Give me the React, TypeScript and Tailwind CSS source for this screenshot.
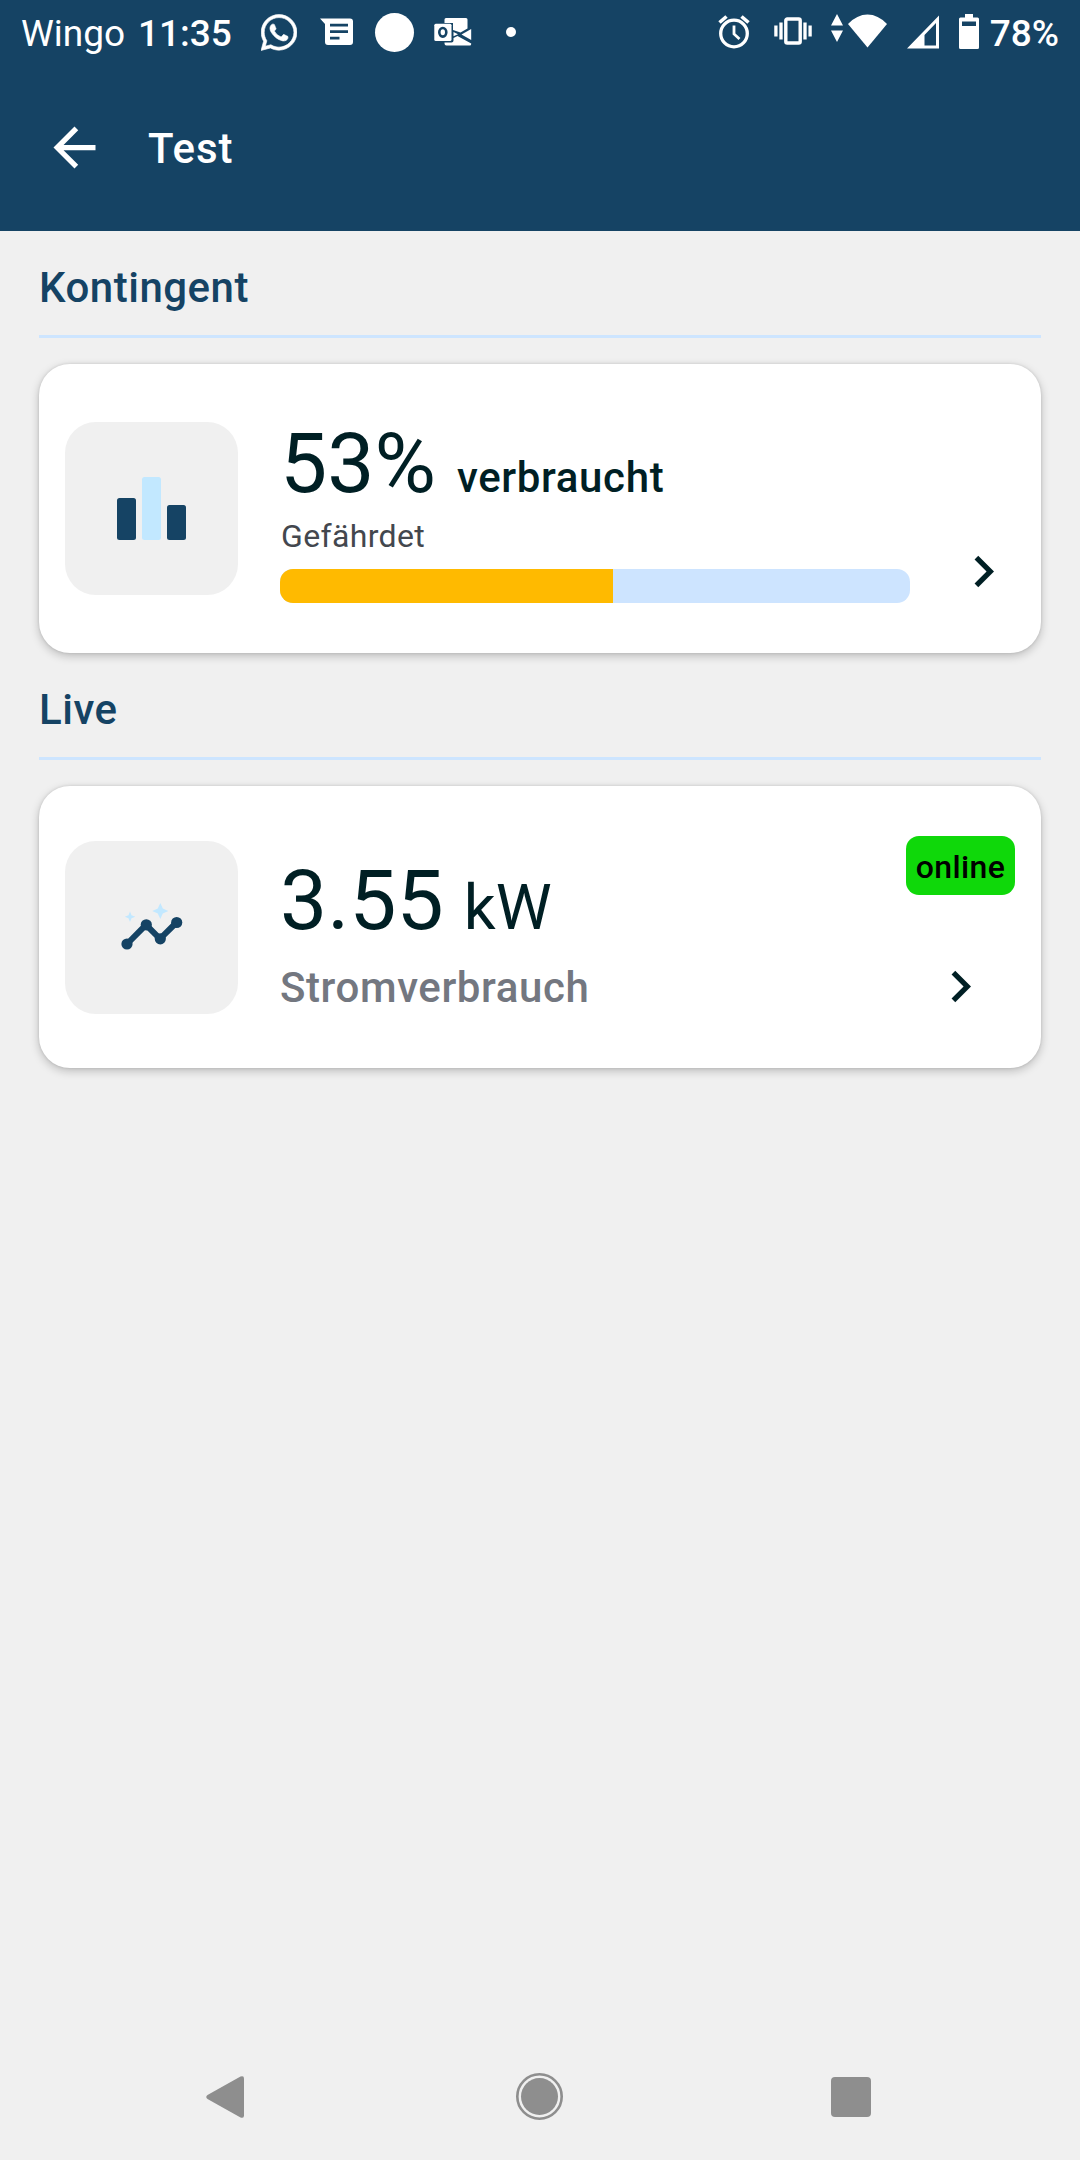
import type { ReactNode } from 'react';
import { FaWhatsapp } from 'react-icons/fa';
import { MdArrowBack, MdChevronRight } from 'react-icons/md';

export default function App() {
  return (
    <div className="flex h-[2160px] w-[1080px] flex-col overflow-hidden bg-[#f0f0f0] font-[Roboto,sans-serif]">
      <header className="h-[231px] bg-[#154364] text-white">
        <StatusBar />
        <div className="flex h-[167px] items-center pl-[43px]">
          <MdArrowBack className="size-[63px]" />
          <h1 className="ml-[42px] pt-[3px] text-[42px] font-medium leading-none tracking-[0.9px]">Test</h1>
        </div>
      </header>

      <main className="flex-1 px-[39px]">
        <Section title="Kontingent">
          <QuotaCard percent={53} />
        </Section>
        <Section title="Live">
          <LiveCard />
        </Section>
      </main>

      <NavBar />
    </div>
  );
}

function StatusBar() {
  return (
    <div className="flex h-16 items-center pl-[21px] pr-[21px] text-[37px] leading-none">
      <span className="w-[117px] pt-[2px]">Wingo</span>
      <span className="w-[123px] pt-[2px] font-medium">11:35</span>
      <FaWhatsapp className="h-[41px] w-9" stroke="#fff" strokeWidth="8" />

      {/* messages */}
      <svg className="ml-[23px] mb-px h-7 w-[33px]" viewBox="0 0 33 28" fill="none">
        <path d="M0 .5h30a3 3 0 0 1 3 3V24a3 3 0 0 1-3 3H8a3 3 0 0 1-3-3V6z" fill="#fff" />
        <path d="M10 7.2h18M10 13.7h18M10 20.2h9.500" stroke="#154364" strokeWidth="2.8" />
      </svg>

      <span className="ml-[22px] size-[39px] rounded-full bg-white" />

      {/* outlook */}
      <svg className="ml-5 mb-px h-7 w-[38px]" viewBox="0 0 38 28" fill="none">
        <path d="M12 0h20a1.500 1.500 0 0 1 1.500 1.500V10.500L26.500 14.500 19 12V5H10.500V1.500A1.500 1.500 0 0 1 12 0z" fill="#fff" />
        <path d="M37.200 11v11L27.500 16.500z" fill="#fff" />
        <path d="M19.500 14l4.500 2.300-4.500 2zM19.500 20l4-2 13.700 7.500V26a1.500 1.500 0 0 1-1.500 1.500H12.500a2 2 0 0 1-2-2V24.500h7a2 2 0 0 0 2-2z" fill="#fff" />
        <rect x=".3" y="5.800" width="17.200" height="17.200" rx="1.500" fill="#fff" />
        <ellipse cx="8.800" cy="14.300" rx="3.500" ry="4.300" stroke="#154364" strokeWidth="2.600" />
      </svg>

      <span className="ml-[34px] size-2.5 rounded-full bg-white" />

      {/* alarm */}
      <svg className="ml-auto h-[34px] w-8" viewBox="0 0 32 34" fill="none" stroke="#fff">
        <circle cx="16" cy="18.500" r="13.300" strokeWidth="3.300" />
        <path d="M1.500 7.500 8.500 1.500M30.500 7.500 23.500 1.500" strokeWidth="3.600" />
        <path d="M16 10.500V19l5.500 5" strokeWidth="2.800" />
      </svg>

      {/* vibrate */}
      <svg className="ml-6 mb-[2px] h-7 w-[38px]" viewBox="0 0 38 28" fill="none" stroke="#fff" strokeWidth="3.400">
        <rect x="11.800" y="2" width="14.400" height="24" rx="1.500" />
        <path d="M1.900 8.500v11M7 5.500v17M31 5.500v17M36.100 8.500v11" strokeWidth="3.300" />
      </svg>

      {/* wifi with activity arrows */}
      <svg className="ml-[19px] mb-[3px] h-[34px] w-14" viewBox="0 0 56 34" fill="#fff">
        <path d="M6 0l6 11.500H0zM6 28l6-11.500H0z" />
        <path d="M17 10Q26 .5 36.500 .5T56 10L36.500 33.500z" />
      </svg>

      {/* signal */}
      <svg className="ml-5 mb-px h-[34px] w-8" viewBox="0 0 32 34" fill="#fff">
        <path fillRule="evenodd" d="M0 33.500 32 .5v33zM17.500 20v10.500h11.500V8z" />
      </svg>

      {/* battery */}
      <svg className="ml-5 mb-[2px] h-[35px] w-5" viewBox="0 0 20 35" fill="#fff">
        <path fillRule="evenodd" d="M6 0h8v3.500h4.500A1.500 1.500 0 0 1 20 5v28.500a1.500 1.500 0 0 1-1.500 1.500h-17A1.500 1.500 0 0 1 0 33.500V5a1.500 1.500 0 0 1 1.500-1.500H6zM3 7.500V12h14V7.500z" />
      </svg>
      <span className="ml-[11px] pt-[2px] font-medium">78%</span>
    </div>
  );
}

function Section({ title, children }: { title: string; children: ReactNode }) {
  return (
    <section>
      <h2 className="flex h-[107px] items-center border-b-[3px] border-[#cde5ff] pt-[9px] text-[42px] font-medium leading-none tracking-[0.5px] text-[#154364]">
        {title}
      </h2>
      <div className="pt-[26px]">{children}</div>
    </section>
  );
}

function IconTile({ children }: { children: ReactNode }) {
  return (
    <div className="flex size-[173px] shrink-0 items-center justify-center self-center rounded-[31px] bg-[#f0f0f0]">
      {children}
    </div>
  );
}

function QuotaCard({ percent }: { percent: number }) {
  return (
    <article className="flex h-[289px] rounded-[31px] bg-white px-[26px] text-[#001f24] shadow-[0_3px_10px_rgba(0,0,0,0.22),0_0_3px_rgba(0,0,0,0.12)]">
      <IconTile>
        <svg className="h-[63px] w-[69px]" viewBox="0 0 69 63">
          <rect x="0" y="21" width="19" height="42" rx="2.500" fill="#154364" />
          <rect x="25" y="0" width="19" height="63" rx="2.500" fill="#c2e8ff" />
          <rect x="50" y="28" width="19" height="35" rx="2.500" fill="#154364" />
        </svg>
      </IconTile>
      <div className="ml-[42px] w-[630px] pt-[58px]">
        <p className="flex items-baseline text-[84px] leading-[84px]">
          {percent}%<span className="ml-[21px] text-[42px] font-medium leading-none tracking-[0.65px]">verbraucht</span>
        </p>
        <p className="ml-px mt-3 text-[32px] leading-[37px] tracking-[0.35px] text-[#43474e]">Gefährdet</p>
        <div className="mt-[14px] h-[34px] overflow-hidden rounded-[13px] bg-[#cde4ff]">
          <div className="h-full bg-[#ffba00]" style={{ width: `${percent - 0.2}%` }} />
        </div>
      </div>
      <MdChevronRight className="ml-[42px] mt-[176px] size-[63px]" />
    </article>
  );
}

function LiveCard() {
  return (
    <article className="flex h-[282px] rounded-[31px] bg-white px-[26px] text-[#001f24] shadow-[0_3px_10px_rgba(0,0,0,0.22),0_0_3px_rgba(0,0,0,0.12)]">
      <IconTile>
        <svg className="size-[63px]" viewBox="0 0 63 63">
          <path d="M7 48 26 28.800 40 42.800 56.500 26.500" fill="none" stroke="#154364" strokeWidth="6" />
          <g fill="#154364">
            <circle cx="7" cy="48" r="5.600" />
            <circle cx="26.300" cy="28.800" r="5.600" />
            <circle cx="40.300" cy="42.800" r="5.600" />
            <circle cx="56.700" cy="26.500" r="5.600" />
          </g>
          <path d="M40.300 7l2.500 5.500 5.500 2.500-5.500 2.500-2.500 5.500-2.500-5.500-5.500-2.500 5.500-2.500zM10 15.500l1.500 3.700 3.800 1.500-3.800 1.500-1.500 3.800-1.500-3.800-3.700-1.500 3.700-1.500z" fill="#c2e8ff" />
        </svg>
      </IconTile>
      <div className="ml-[42px] pt-[73px]">
        <p className="flex items-baseline text-[84px] leading-[84px]">
          3.55<span className="ml-5 text-[63px] leading-none">kW</span>
        </p>
        <p className="mt-[20px] text-[42px] font-medium leading-[50px] tracking-[0.6px] text-[#737780]">Stromverbrauch</p>
      </div>
      <div className="ml-auto flex flex-col items-end pt-[50px]">
        <span className="flex h-[59px] w-[109px] items-center justify-center rounded-[13px] bg-[#0fd80a] pt-[2px] text-[32px] font-medium leading-none tracking-[0.4px] text-black">
          online
        </span>
        <MdChevronRight className="mr-[23px] mt-[60px] size-[63px]" />
      </div>
    </article>
  );
}

function NavBar() {
  return (
    <nav className="flex h-[126px] items-center pl-[206px]">
      <svg className="h-[42px] w-[38px]" viewBox="0 0 38 42" fill="#8e8e8e">
        <path d="M1.500 19 34.500.6Q38-.8 38 2.500v37q0 3.300-3.500 1.900L1.500 23q-2.500-2 0-4z" />
      </svg>
      <svg className="mb-px ml-[272px] size-[47px]" viewBox="0 0 47 47" fill="#8e8e8e">
        <circle cx="23.500" cy="23.500" r="22.200" fill="none" stroke="#8e8e8e" strokeWidth="2.600" />
        <circle cx="23.500" cy="23.500" r="18.500" />
      </svg>
      <span className="ml-[268px] size-10 rounded-[4px] bg-[#8e8e8e]" />
    </nav>
  );
}
